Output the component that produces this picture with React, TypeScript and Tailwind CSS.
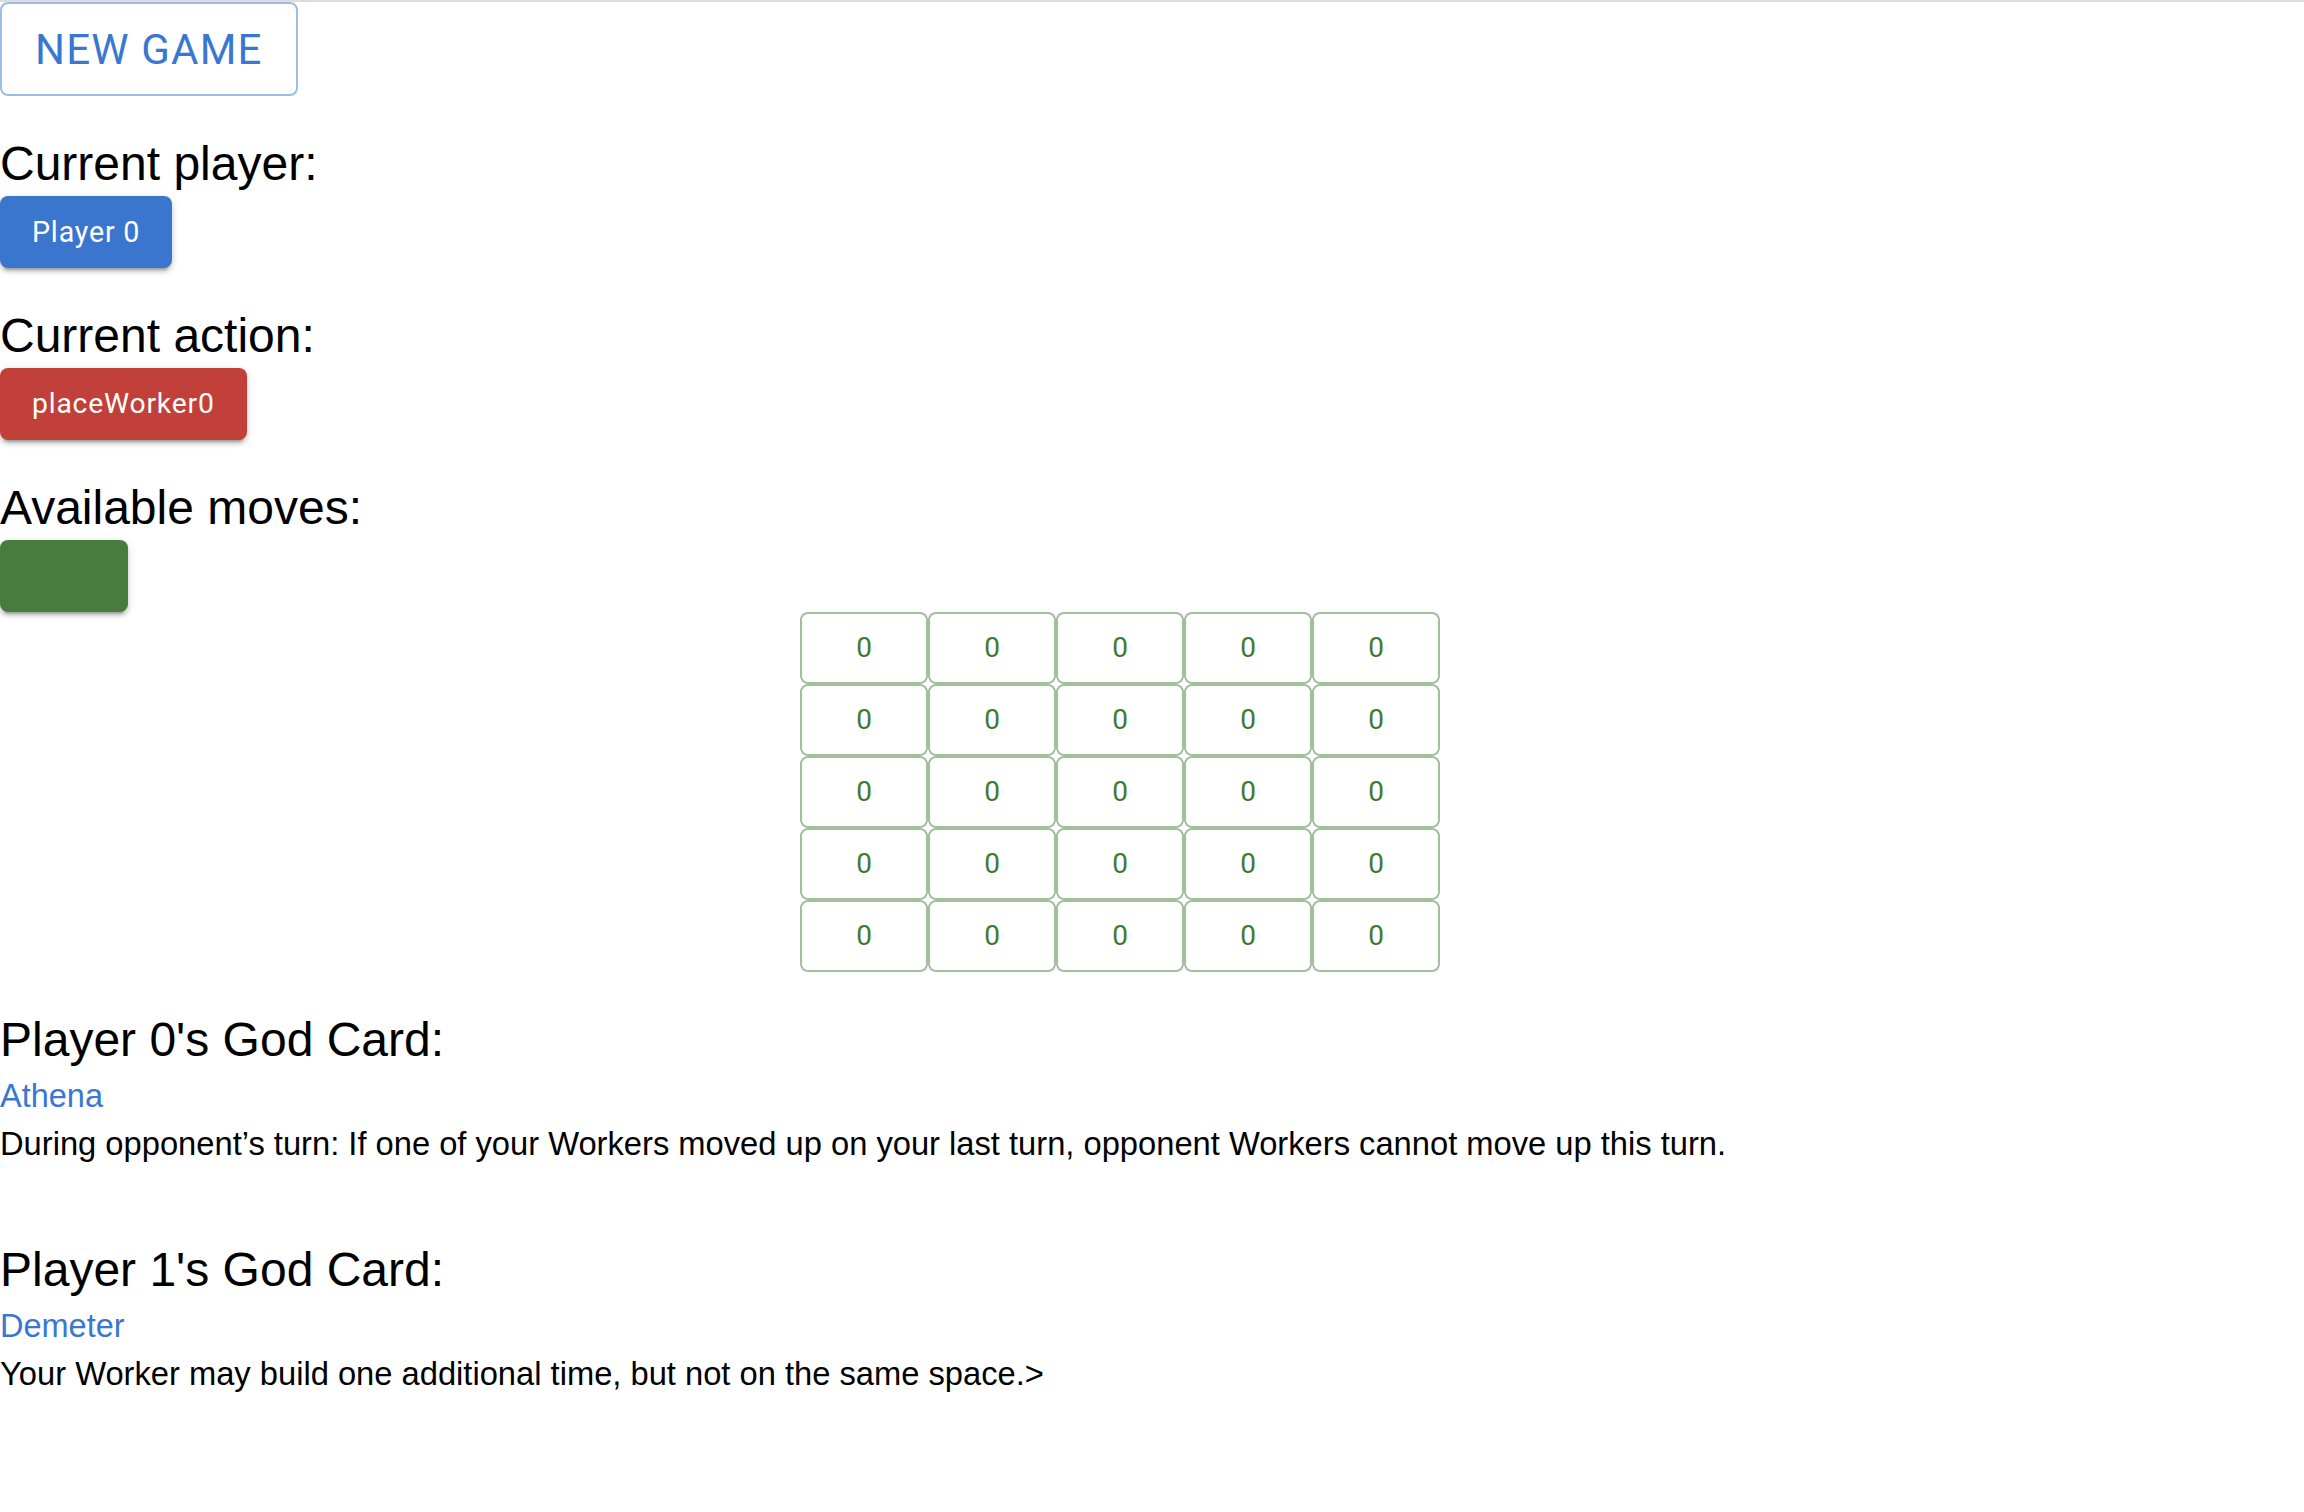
import { useState } from 'react';

type GodCard = {
  player: number;
  name: string;
  text: string;
};

const godCards: GodCard[] = [
  {
    player: 0,
    name: 'Athena',
    text: 'During opponent\u2019s turn: If one of your Workers moved up on your last turn, opponent Workers cannot move up this turn.',
  },
  {
    player: 1,
    name: 'Demeter',
    text: 'Your Worker may build one additional time, but not on the same space.>',
  },
];

const raised =
  'shadow-[0_6px_2px_-4px_rgba(0,0,0,0.2),0_4px_4px_0_rgba(0,0,0,0.14),0_2px_10px_0_rgba(0,0,0,0.12)]';

const Heading = ({ children }: { children: React.ReactNode }) => (
  <h2 className="mt-9 h-16 text-[48px] leading-[64px] font-normal text-black">{children}</h2>
);

export default function App() {
  const [board] = useState<number[][]>(() => Array.from({ length: 5 }, () => Array(5).fill(0)));

  return (
    <div className="min-h-screen bg-white border-t-2 border-[#dcdcdc] font-['Liberation_Sans',Arial,sans-serif] text-black">
      <div className="flex">
        <button className="h-[94px] rounded-lg border-2 border-[#9dbde9] px-[33px] font-['Roboto',sans-serif] text-[42px] uppercase tracking-[0.02857em] text-[#3a77d0]">
          New Game
        </button>
      </div>

      <Heading>Current player:</Heading>
      <div className="flex">
        <button
          className={`h-[72px] min-w-[128px] rounded-lg bg-[#3a76ce] px-8 font-['Roboto',sans-serif] text-[28.6px] tracking-[0.02857em] text-white ${raised}`}
        >
          Player 0
        </button>
      </div>

      <Heading>Current action:</Heading>
      <div className="flex">
        <button
          className={`h-[72px] min-w-[128px] rounded-lg bg-[#c2403a] px-8 font-['Roboto',sans-serif] text-[28.3px] tracking-[0.02857em] text-white ${raised}`}
        >
          placeWorker0
        </button>
      </div>

      <Heading>Available moves:</Heading>
      <div className="flex">
        <button className={`h-[72px] min-w-[128px] rounded-lg bg-[#477c3e] px-8 ${raised}`} />
      </div>

      <div className="flex pl-[800px]">
        <div className="grid w-[640px] grid-cols-5">
          {board.flat().map((height, i) => (
            <button
              key={i}
              className="flex h-[72px] w-[128px] items-center justify-center rounded-lg border-2 border-[#a3c09d] font-['Roboto',sans-serif] text-[28px] text-[#3e7b30]"
            >
              {height}
            </button>
          ))}
        </div>
      </div>

      {godCards.map((card, i) => (
        <div key={card.player} className={i > 0 ? 'pt-[34px]' : ''}>
          <Heading>Player {card.player}'s God Card:</Heading>
          <div className="text-[32.5px] leading-[48px] text-[#3a77d3]">{card.name}</div>
          <p className="text-[32.7px] leading-[48px]">{card.text}</p>
        </div>
      ))}
    </div>
  );
}
